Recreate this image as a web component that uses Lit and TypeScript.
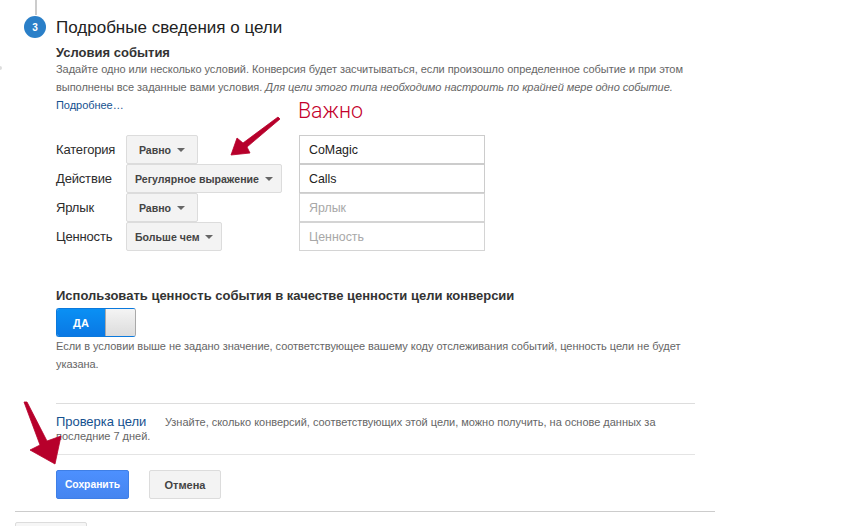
import { LitElement, html, css } from "lit";
import { customElement } from "lit/decorators.js";

const rows = [
  { label: "Категория", op: "Равно", value: "CoMagic", ph: "" },
  { label: "Действие", op: "Регулярное выражение", value: "Calls", ph: "" },
  { label: "Ярлык", op: "Равно", value: "", ph: "Ярлык" },
  { label: "Ценность", op: "Больше чем", value: "", ph: "Ценность" },
];

@customElement("app-root")
export class AppRoot extends LitElement {
  static styles = css`
    :host {
      display: block;
      position: relative;
      width: 849px;
      height: 526px;
      overflow: hidden;
      background: #fff;
      font-family: "Liberation Sans", Arial, sans-serif;
      color: #222;
    }
    .page {
      display: flex;
      flex-direction: column;
      padding: 0 0 0 15px;
      width: 700px;
    }
    .rail {
      width: 2px;
      height: 15px;
      background: #ccc;
      margin-left: 20px;
    }
    .head {
      display: flex;
      align-items: center;
      gap: 10px;
      margin-left: 9px;
      height: 24px;
    }
    .step {
      width: 22px;
      height: 22px;
      border-radius: 50%;
      background: #2a7fc8;
      color: #fff;
      font-size: 10px;
      font-weight: 700;
      display: flex;
      align-items: center;
      justify-content: center;
    }
    .head h2 {
      margin: 1px 0 0;
      font-size: 17px;
      font-weight: 400;
      color: #222;
      line-height: 24px;
    }
    .body {
      display: flex;
      flex-direction: column;
      margin-left: 41px;
      width: 639px;
    }
    .sub {
      font-size: 13px;
      font-weight: 700;
      color: #333;
      line-height: 16px;
      margin-top: 6px;
    }
    .note {
      font-size: 11px;
      line-height: 18px;
      color: #666;
      letter-spacing: -0.04px;
    }
    .note.intro {
      margin-top: -1px;
      width: 636px;
    }
    .note em { font-style: italic; }
    .link { color: #15518f; text-decoration: none; }
    .form {
      display: grid;
      grid-template-columns: 70px 173px 186px;
      grid-auto-rows: 29px;
      margin-top: 21px;
      align-items: stretch;
    }
    .label {
      font-size: 13px;
      letter-spacing: -0.17px;
      color: #2c2c2c;
      display: flex;
      align-items: center;
    }
    .cell { display: flex; }
    .drop {
      display: flex;
      align-items: center;
      gap: 6px;
      padding: 0 8px;
      min-width: 54px;
      justify-content: center;
      box-sizing: content-box;
      border: 1px solid #dcdcdc;
      border-radius: 2px;
      background: #f3f3f3;
      font-size: 10.6px;
      font-weight: 700;
      color: #444;
      height: 27px;
    }
    .caret {
      width: 0;
      height: 0;
      border-left: 4px solid transparent;
      border-right: 4px solid transparent;
      border-top: 4px solid #666;
    }
    .field {
      border: 1px solid #ccc;
      padding: 0 9px;
      font-size: 12.4px;
      color: #222;
      display: flex;
      align-items: center;
      background: #fff;
      box-sizing: border-box;
    }
    .field.ph { color: #a8a8a8; border-color: #d4d4d4; }
    .use {
      font-size: 13px;
      font-weight: 700;
      color: #333;
      line-height: 16px;
      margin-top: 37px;
    }
    .toggle {
      display: flex;
      width: 80px;
      height: 29px;
      margin-top: 4px;
      border-radius: 3px;
      overflow: hidden;
      box-sizing: border-box;
      border: 1px solid #a9a9a9;
      border-left-color: #0b79dc;
      border-top-color: #0b79dc;
      border-bottom-color: #0b79dc;
    }
    .on {
      width: 48px;
      background: linear-gradient(#0a90f4, #0a78e4);
      color: #fff;
      font-size: 11px;
      font-weight: 700;
      display: flex;
      align-items: center;
      justify-content: center;
    }
    .knob {
      flex: 1;
      background: linear-gradient(#f4f4f4, #dcdcdc);
      border-left: 1px solid #aaa;
      border-top: 1px solid #aaa;
      border-bottom: 1px solid #aaa;
      margin: -1px 0;
    }
    .toggle-note { margin-top: 0; width: 636px; }
    .check {
      margin-top: 30px;
      border-top: 1px solid #ddd;
      border-bottom: 1px solid #e4e4e4;
      height: 50px;
      box-sizing: content-box;
      font-size: 11px;
      letter-spacing: -0.02px;
      color: #666;
      line-height: 14px;
    }
    .check-line { display: flex; align-items: baseline; margin-top: 11px; }
    .check-title {
      width: 109px;
      flex: none;
      font-size: 13px;
      letter-spacing: -0.05px;
      color: #15518f;
    }
    .actions {
      display: flex;
      gap: 20px;
      margin-top: 15px;
    }
    .btn {
      height: 29px;
      box-sizing: border-box;
      border-radius: 2px;
      display: flex;
      align-items: center;
      justify-content: center;
      font-size: 11px;
      font-weight: 700;
    }
    .save {
      width: 73px;
      font-size: 10.3px;
      background: linear-gradient(#4d90fe, #4585f0);
      border: 1px solid #3f7fe6;
      color: #fff;
    }
    .cancel {
      width: 72px;
      background: #f3f3f3;
      border: 1px solid #dcdcdc;
      color: #444;
    }
    .foot {
      margin-top: 12px;
      border-top: 1px solid #ccc;
      width: 700px;
      padding-top: 10px;
    }
    .stub {
      width: 72px;
      height: 29px;
      box-sizing: border-box;
      border: 1px solid #dcdcdc;
      border-radius: 2px;
      background: #f6f6f6;
    }
    .dot {
      position: absolute;
      left: -2px;
      top: 66px;
      width: 4px;
      height: 4px;
      border-radius: 50%;
      background: #ddd;
    }
    .important {
      position: absolute;
      left: 298px;
      top: 97px;
      font-family: Roboto, sans-serif;
      font-weight: 300;
      font-size: 21.4px;
      line-height: 28px;
      color: #c4002c;
    }
    .arrow { position: absolute; left: 0; top: 0; pointer-events: none; }
    .arrow polygon {
      fill: #b7002b;
      stroke: #b7002b;
      stroke-width: 0.8;
      stroke-linejoin: round;
    }
  `;

  render() {
    return html`
      <div class="page">
        <div class="rail"></div>
        <div class="head">
          <div class="step">3</div>
          <h2>Подробные сведения о цели</h2>
        </div>
        <div class="body">
          <div class="sub">Условия события</div>
          <div class="note intro">
            Задайте одно или несколько условий. Конверсия будет засчитываться, если произошло определенное событие и при этом
            выполнены все заданные вами условия. <em>Для цели этого типа необходимо настроить по крайней мере одно событие.</em>
            <br /><a class="link">Подробнее…</a>
          </div>
          <div class="form">
            ${rows.map(
              (r) => html`
                <div class="label">${r.label}</div>
                <div class="cell">
                  <div class="drop">${r.op}<span class="caret"></span></div>
                </div>
                <div class="field ${r.ph ? "ph" : ""}">${r.value || r.ph}</div>
              `
            )}
          </div>
          <div class="use">Использовать ценность события в качестве ценности цели конверсии</div>
          <div class="toggle">
            <div class="on">ДА</div>
            <div class="knob"></div>
          </div>
          <div class="note toggle-note">
            Если в условии выше не задано значение, соответствующее вашему коду отслеживания событий, ценность цели не будет указана.
          </div>
          <div class="check">
            <div class="check-line">
              <span class="check-title">Проверка цели</span>
              <span>Узнайте, сколько конверсий, соответствующих этой цели, можно получить, на основе данных за</span>
            </div>
            <div>последние 7 дней.</div>
          </div>
          <div class="actions">
            <div class="btn save">Сохранить</div>
            <div class="btn cancel">Отмена</div>
          </div>
        </div>
        <div class="foot"><div class="stub"></div></div>
      </div>
      <div class="dot"></div>
      <div class="important">Важно</div>
      <svg class="arrow" width="849" height="526" viewBox="0 0 849 526">
        <polygon points="231,155 237,138 243,143 278,117 280,119 247,147 250,153" />
        <polygon points="24,402 27,402 47,441 61,436 55,464 30,450 40,445" />
      </svg>
    `;
  }
}
